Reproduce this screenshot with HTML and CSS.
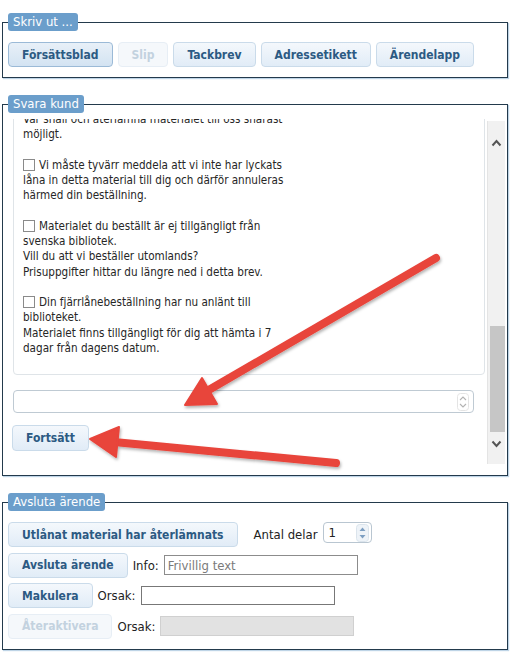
FILE: index.html
```html
<!DOCTYPE html>
<html lang="sv">
<head>
<meta charset="utf-8">
<title>Ärende</title>
<link rel="stylesheet" href="styles.css">
</head>
<body>
<div class="page">
  <fieldset class="group">
    <legend>Skriv ut ...</legend>
    <div class="btn-row">
      <button class="btn btn-active">Försättsblad</button>
      <button class="btn" disabled>Slip</button>
      <button class="btn">Tackbrev</button>
      <button class="btn">Adressetikett</button>
      <button class="btn">Ärendelapp</button>
    </div>
  </fieldset>

  <fieldset class="group group-reply">
    <legend>Svara kund</legend>
    <div class="scroller">
      <div class="scroll-content">
        <div class="letter">
          <p>Var snäll och återlämna materialet till oss snarast<br>möjligt.</p>
          <p><span class="cb"></span>Vi måste tyvärr meddela att vi inte har lyckats<br>låna in detta material till dig och därför annuleras<br>härmed din beställning.</p>
          <p><span class="cb"></span>Materialet du beställt är ej tillgängligt från<br>svenska bibliotek.<br>Vill du att vi beställer utomlands?<br>Prisuppgifter hittar du längre ned i detta brev.</p>
          <p><span class="cb"></span>Din fjärrlånebeställning har nu anlänt till<br>biblioteket.<br>Materialet finns tillgängligt för dig att hämta i 7<br>dagar från dagens datum.</p>
        </div>
        <div class="reply-input">
          <svg class="resize" width="12" height="18" viewBox="0 0 12 18"><rect x="0.5" y="0.5" width="11" height="17" rx="3" fill="none" stroke="#e4e4e4"/><path d="M3 7 L6 4 L9 7 M3 11 L6 14 L9 11" fill="none" stroke="#b3b3b3" stroke-width="1.1"/></svg>
        </div>
        <button class="btn btn-continue">Fortsätt</button>
      </div>
      <div class="scrollbar">
        <div class="sb-up"><svg width="11" height="8" viewBox="0 0 11 8"><path d="M1.5 6.5 L5.5 2 L9.5 6.5" fill="none" stroke="#555" stroke-width="2"/></svg></div>
        <div class="sb-track"></div>
        <div class="sb-thumb"></div>
        <div class="sb-down"><svg width="11" height="8" viewBox="0 0 11 8"><path d="M1.5 1.5 L5.5 6 L9.5 1.5" fill="none" stroke="#555" stroke-width="2"/></svg></div>
      </div>
    </div>
  </fieldset>

  <fieldset class="group group-close">
    <legend>Avsluta ärende</legend>
    <div class="rows">
      <div class="row">
        <button class="btn">Utlånat material har återlämnats</button>
        <span class="label label-parts">Antal delar</span>
        <div class="num">
          <span>1</span>
          <svg width="13" height="18" viewBox="0 0 13 18"><rect x="0.5" y="0.5" width="12" height="17" rx="3" fill="#eef3f8" stroke="#dbe4ec"/><path d="M6.5 3.5 L9.5 7 L3.5 7 Z M6.5 14.5 L9.5 11 L3.5 11 Z" fill="#7d9fc2"/></svg>
        </div>
      </div>
      <div class="row">
        <button class="btn">Avsluta ärende</button>
        <span class="label">Info:</span>
        <input class="field field-info" type="text" placeholder="Frivillig text">
      </div>
      <div class="row">
        <button class="btn">Makulera</button>
        <span class="label">Orsak:</span>
        <input class="field field-reason" type="text">
      </div>
      <div class="row">
        <button class="btn" disabled>Återaktivera</button>
        <span class="label">Orsak:</span>
        <input class="field field-disabled" type="text" disabled>
      </div>
    </div>
  </fieldset>
</div>

<svg class="annot" width="512" height="655" viewBox="0 0 512 655" aria-hidden="true">
  <defs>
    <filter id="sh" x="-10%" y="-20%" width="130%" height="150%">
      <feDropShadow dx="1" dy="2" stdDeviation="1.4" flood-color="#000" flood-opacity="0.3"/>
    </filter>
  </defs>
  <g filter="url(#sh)" fill="#e8443b" stroke="#e8443b">
    <line x1="436" y1="258" x2="207" y2="391" stroke-width="8" stroke-linecap="round"/>
    <polygon points="185,405 202,378 217,404" stroke-width="2" stroke-linejoin="round"/>
    <line x1="336" y1="463" x2="114" y2="442" stroke-width="8" stroke-linecap="round"/>
    <polygon points="90,439 119,427 116,457" stroke-width="2" stroke-linejoin="round"/>
  </g>
</svg>
</body>
</html>
```

FILE: styles.css
```css
* { box-sizing: border-box; }

html, body {
  margin: 0;
  padding: 0;
  background: #ffffff;
}

body {
  width: 512px;
  height: 655px;
  position: relative;
  overflow: hidden;
  font-family: "DejaVu Sans Condensed", "DejaVu Sans", sans-serif;
  color: #222;
}

.page {
  padding: 13px 4px 0 2px;
  display: flex;
  flex-direction: column;
  gap: 17px;
}

.group {
  margin: 0;
  min-width: 0;
  border: 1px solid #233a4c;
  box-shadow: 1px 1px 1px rgba(110, 160, 200, 0.45);
  padding: 11px 2px 10px 5px;
}

.group legend {
  background: #6b9ecb;
  color: #fff;
  font-size: 13px;
  line-height: 18px;
  height: 18px;
  padding: 0 5px;
  border-radius: 3px;
}

.btn-row {
  display: flex;
  gap: 5px;
}

.btn {
  font-family: "DejaVu Sans Condensed", "DejaVu Sans", sans-serif;
  font-weight: bold;
  font-size: 12px;
  color: #2c5a83;
  height: 25px;
  padding: 0 13px;
  border: 1px solid #cadbea;
  border-radius: 4px;
  background: linear-gradient(#f4f8fc, #e1ecf7);
  white-space: nowrap;
}

.btn-active {
  border-color: #9bbad7;
  background: linear-gradient(#e8f0f8, #d3e3f2);
}

.btn:disabled {
  color: #c3d2df;
  border-color: #e7eef5;
  background: #f5f8fb;
}

/* Svara kund */
.group-reply {
  padding-top: 6px;
  padding-bottom: 11px;
}

.scroller {
  display: flex;
  height: 345px;
}

.scroll-content {
  flex: 1;
  min-width: 0;
  overflow: hidden;
  padding: 0 2px 0 5px;
}

.letter {
  margin-top: -8px;
  border: 1px solid #dfe4e8;
  border-radius: 4px;
  padding: 0 9px 18px 9px;
  font-family: "DejaVu Sans Condensed", "DejaVu Sans", sans-serif;
  font-size: 11.6px;
  line-height: 15.25px;
  color: #262626;
  white-space: nowrap;
}

.letter p {
  margin: 0 0 15.25px 0;
}

.letter p:last-child {
  margin-bottom: 0;
}

.cb {
  display: inline-block;
  width: 12px;
  height: 12px;
  border: 1px solid #8a8a8a;
  background: #fff;
  vertical-align: -2px;
  margin-right: 4px;
}

.reply-input {
  margin-top: 15px;
  width: 461px;
  height: 23px;
  border: 1px solid #bfcad3;
  border-radius: 4px;
  background: #fff;
  display: flex;
  align-items: center;
  justify-content: flex-end;
  padding-right: 4px;
}

.btn-continue {
  margin-top: 12px;
  margin-left: -1px;
  height: 26px;
}

.scrollbar {
  width: 18px;
  margin-top: 2px;
  background: #f1f1f1;
  border-left: 1px solid #e4e4e4;
  display: flex;
  flex-direction: column;
}

.sb-up {
  height: 40px;
  display: flex;
  justify-content: center;
  padding-top: 18px;
}

.sb-track {
  flex: 1;
}

.sb-thumb {
  height: 106px;
  background: #c6c6c6;
  margin-left: 2px;
}

.sb-down {
  height: 32px;
  display: flex;
  justify-content: center;
  padding-top: 8px;
}

/* Avsluta ärende */
.group-close {
  padding-top: 11px;
  padding-bottom: 10px;
}

.rows {
  display: flex;
  flex-direction: column;
  gap: 5.6px;
}

.row {
  display: flex;
  align-items: center;
  gap: 5px;
  height: 25px;
}

.label {
  font-size: 13px;
  color: #222;
}

.label-parts {
  margin-left: 11px;
}

.num {
  width: 49px;
  height: 21px;
  margin-top: -4px;
  border: 1px solid #b9c6d1;
  border-radius: 4px;
  background: #fff;
  display: flex;
  align-items: center;
  justify-content: space-between;
  padding: 0 2px 0 5px;
  font-size: 13px;
}

.field {
  width: 194px;
  height: 20px;
  margin: 0;
  padding: 0 3px;
  font-family: "DejaVu Sans Condensed", "DejaVu Sans", sans-serif;
  font-size: 13px;
  border: 1px solid #8c8c8c;
  border-radius: 0;
  background: #fff;
  outline: none;
}

.field::placeholder {
  color: #7a7a7a;
}

.field-reason {
  height: 19px;
  border-color: #777;
}

.field-disabled {
  background: #e2e2e2;
  border-color: #d0d0d0;
}

.annot {
  position: absolute;
  top: 0;
  left: 0;
  pointer-events: none;
}
```
